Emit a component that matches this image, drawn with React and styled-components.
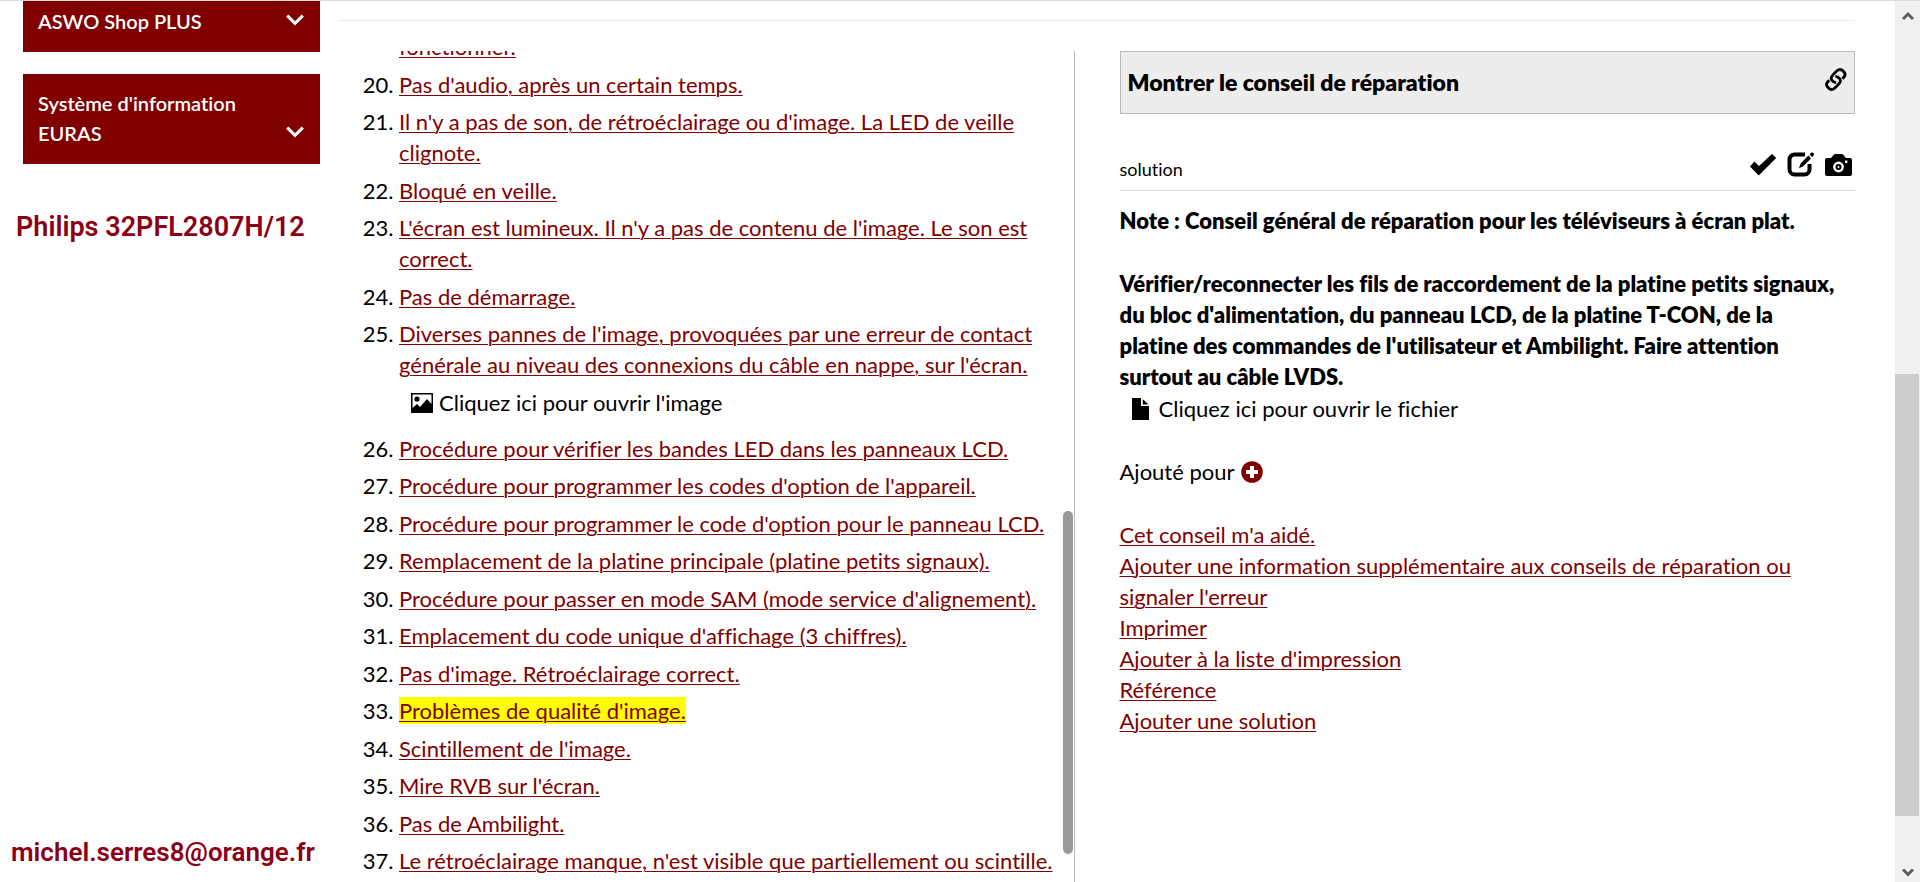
import React from 'react';
import styled, { createGlobalStyle, css } from 'styled-components';

const GlobalStyle = createGlobalStyle`
  *, *::before, *::after { box-sizing: border-box; }
  body {
    margin: 0;
    background: #fff;
    color: #000;
    font-family: Lato, "Liberation Sans", sans-serif;
    font-size: 22px;
    line-height: 31px;
    font-variant-ligatures: none;
  }
  button { font: inherit; color: inherit; cursor: pointer; }
`;

const Page = styled.div`
  display: flex;
  height: 100vh;
  overflow: hidden;
  border-top: 1px solid #dcdcdc;
`;

const Sidebar = styled.aside`
  display: flex;
  flex-direction: column;
  flex: none;
  width: 339px;
  padding-bottom: 14px;
`;

const MenuButton = styled.button`
  display: flex;
  align-items: flex-end;
  justify-content: space-between;
  flex: none;
  margin: 0 19px 22px 23px;
  padding: ${(p) => (p.$cut ? '5px' : '14px')} 16px 16px 15px;
  border: 0;
  background: #800000;
  color: #fff;
  font-size: 20px;
  font-weight: 600;
  line-height: 30px;
  text-align: left;

  svg { flex: none; margin-bottom: 10px; }
`;

const accountText = css`
  margin: 0;
  color: #8b0016;
  font-family: Roboto, "Liberation Sans", sans-serif;
  font-weight: 600;
  line-height: 32px;
  white-space: nowrap;
`;

const DeviceName = styled.h1`
  ${accountText}
  padding: 25px 0 0 16px;
  font-size: 27px;
`;

const Account = styled.p`
  ${accountText}
  margin-top: auto;
  padding-left: 11px;
  font-size: 26px;
`;

const Main = styled.main`
  display: flex;
  flex-direction: column;
  flex: 1;
  min-width: 0;
  padding: 19px 40px 0 0;
`;

const Columns = styled.div`
  display: grid;
  grid-template-columns: 1fr 1fr;
  grid-template-rows: minmax(0, 1fr);
  gap: 45px;
  flex: 1;
  min-height: 0;
  padding-top: 30px;
  border-top: 1px solid #ececec;
`;

const ListPane = styled.section`
  position: relative;
  overflow: hidden;
  border-right: 1px solid #bbb;
`;

const Tips = styled.ol`
  margin: -20px 0 0;
  padding-left: 60px;
`;

const Tip = styled.li`
  padding-bottom: 6px;
  &:nth-child(odd) { padding-bottom: 7px; }
  ${(p) => p.$continued && 'list-style: none;'}
`;

const Link = styled.a`
  color: #800000;
  text-decoration: underline 1px;
  text-underline-offset: 2px;
  ${(p) => p.$active && 'background: #ff0;'}
`;

const Attachment = styled.button`
  display: flex;
  align-items: center;
  gap: ${(p) => p.$gap};
  margin: 1px 0 0;
  padding: 0 0 0 12px;
  border: 0;
  background: none;
  line-height: 31px;
`;

const TipAttachment = styled(Attachment)`
  margin: 7px 0 8px;
`;

const Thumb = styled.div`
  position: absolute;
  top: 460px;
  right: 1px;
  width: 10px;
  height: 343px;
  border-radius: 5px;
  background: #999;
`;

const Detail = styled.section`
  min-width: 0;
`;

const TipHeader = styled.header`
  display: flex;
  align-items: flex-start;
  justify-content: space-between;
  height: 63px;
  padding: 15px 7px 0 7px;
  border: 1px solid #bbb;
  background: #ededed;
`;

const TipTitle = styled.h2`
  margin: 0;
  font-size: 23px;
  font-weight: 800;
  line-height: 31px;
`;

const IconButton = styled.button`
  display: flex;
  padding: 1px 0;
  border: 0;
  background: none;
  color: ${(p) => p.$color || '#000'};
`;

const SolutionBar = styled.div`
  display: flex;
  align-items: flex-end;
  justify-content: space-between;
  margin-top: 37px;
  padding-bottom: 8px;
  border-bottom: 1px solid #ddd;
`;

const SolutionLabel = styled.h3`
  margin: 0;
  font-size: 18px;
  font-weight: 400;
  line-height: 26px;
`;

const Actions = styled.div`
  display: flex;
  align-items: center;
  gap: 10px;
  padding: 0 3px 4px 0;
`;

const Advice = styled.p`
  margin: ${(p) => p.$top} 0 0;
  padding-right: 15px;
  font-weight: 800;
`;

const AddedFor = styled.div`
  display: flex;
  align-items: center;
  gap: 6px;
  margin: 32px 0;
`;

const Links = styled.ul`
  margin: 0;
  padding: 0;
  list-style: none;
`;

const Scrollbar = styled.div`
  display: flex;
  flex-direction: column;
  align-items: center;
  flex: none;
  width: 25px;
  padding: 10px 0 4px;
  background: #f0f0f0;
`;

const ScrollTrack = styled.div`
  display: grid;
  grid-template-rows: 353fr 442fr 52fr;
  align-self: stretch;
  flex: 1;
  padding-right: 1px;

  &::after {
    content: '';
    grid-row: 2;
    background: #cdcdcd;
  }
`;

const ChevronIcon = () => (
  <svg width="18" height="12" viewBox="0 0 18 12" aria-hidden="true">
    <path d="M1.2 1.6 L9 9.4 L16.8 1.6" fill="none" stroke="#fff" strokeWidth="3" />
  </svg>
);

const ArrowIcon = ({ down }) => (
  <svg width="12" height="10" viewBox="0 0 12 10" aria-hidden="true">
    <path d={down ? 'M1 1.5 L6 6.5 L11 1.5' : 'M1 8 L6 3 L11 8'} fill="none" stroke="#5c5c5c" strokeWidth="3" />
  </svg>
);

const PictureIcon = () => (
  <svg width="22" height="20" viewBox="0 0 22 20" aria-hidden="true">
    <path fillRule="evenodd" d="M0 0H22V20H0Z M1.5 1.5V15L6 11L9 14L16 6L20.5 11V1.5Z" />
    <circle cx="6" cy="6" r="2.6" />
  </svg>
);

const FileIcon = () => (
  <svg width="17" height="22" viewBox="0 0 17 22" aria-hidden="true">
    <path d="M0 0H9V8H17V22H0Z M10.8 1.2L16.4 6.6H10.8Z" />
  </svg>
);

const LinkIcon = () => (
  <svg width="22" height="23" viewBox="0 0 22 23" fill="none" stroke="currentColor" strokeWidth="2.8" aria-hidden="true">
    <path d="M11.2 14.6 C8 14.4 5.2 11.6 6.6 8.8 C7.4 7.4 10 4.6 12 2.8 C13.8 1.2 15.8 1.2 17.4 2.4 L19 4 C20.4 5.6 20.4 7.2 19.2 8.8 L17.4 10.8" />
    <path d="M10.4 8.4 C13.6 8.6 16.4 11.4 15 14.2 C14.2 15.6 11.6 18.4 9.6 20.2 C7.8 21.8 5.8 21.8 4.2 20.6 L2.6 19 C1.2 17.4 1.2 15.8 2.4 14.2 L4.2 12.2" />
  </svg>
);

const CheckIcon = () => (
  <svg width="27" height="24" viewBox="0 0 27 24" aria-hidden="true">
    <path d="M0 13.6 L4.4 8.6 L9 13 L22 1 L26.2 5 L8.7 22.6Z" />
  </svg>
);

const EditIcon = () => (
  <svg width="28" height="25" viewBox="0 0 28 25" aria-hidden="true">
    <path d="M18 2.5H7.5A5 5 0 0 0 2.5 7.5V17.5A5 5 0 0 0 7.5 22.5H17.5A5 5 0 0 0 22.5 17.5V12" fill="none" stroke="#000" strokeWidth="4" />
    <path d="M12 16.2 L13.6 11.6 L21.4 3.6 L24 6.4 L16.2 14.2Z M22.6 2.4 L24.4 .6 Q25.4 0 26.4 1 Q27.6 2.2 26.8 3.2 L25.2 5Z" />
  </svg>
);

const CameraIcon = () => (
  <svg width="27" height="22" viewBox="0 0 27 22" aria-hidden="true">
    <path fillRule="evenodd" d="M2 4H6L8.5 1Q9.3 0 10.5 0H16.5Q17.7 0 18.5 1L21 4H25Q27 4 27 6V20Q27 22 25 22H2Q0 22 0 20V6Q0 4 2 4Z M13.5 7.6A5.4 5.4 0 1 0 13.5 18.4A5.4 5.4 0 1 0 13.5 7.6Z M20 6.6H22.4V9H20Z" />
    <path fillRule="evenodd" d="M13.5 10A3 3 0 1 0 13.5 16A3 3 0 1 0 13.5 10Z M13.5 12A1 1 0 1 1 13.5 14A1 1 0 1 1 13.5 12Z" />
  </svg>
);

const PlusIcon = () => (
  <svg width="22" height="22" viewBox="0 0 22 22" aria-hidden="true">
    <circle cx="11" cy="11" r="10.8" fill="currentColor" />
    <path d="M11 5V17M5 11H17" stroke="#fff" strokeWidth="4" />
  </svg>
);

const tips = [
  { text: 'fonctionner.', continued: true },
  { text: "Pas d'audio, après un certain temps." },
  { text: "Il n'y a pas de son, de rétroéclairage ou d'image. La LED de veille clignote." },
  { text: 'Bloqué en veille.' },
  { text: "L'écran est lumineux. Il n'y a pas de contenu de l'image. Le son est correct." },
  { text: 'Pas de démarrage.' },
  {
    text: "Diverses pannes de l'image, provoquées par une erreur de contact générale au niveau des connexions du câble en nappe, sur l'écran.",
    image: "Cliquez ici pour ouvrir l'image",
  },
  { text: 'Procédure pour vérifier les bandes LED dans les panneaux LCD.' },
  { text: "Procédure pour programmer les codes d'option de l'appareil." },
  { text: "Procédure pour programmer le code d'option pour le panneau LCD." },
  { text: 'Remplacement de la platine principale (platine petits signaux).' },
  { text: "Procédure pour passer en mode SAM (mode service d'alignement)." },
  { text: "Emplacement du code unique d'affichage (3 chiffres)." },
  { text: "Pas d'image. Rétroéclairage correct." },
  { text: "Problèmes de qualité d'image.", active: true },
  { text: "Scintillement de l'image." },
  { text: "Mire RVB sur l'écran." },
  { text: 'Pas de Ambilight.' },
  { text: "Le rétroéclairage manque, n'est visible que partiellement ou scintille." },
];

const links = [
  "Cet conseil m'a aidé.",
  "Ajouter une information supplémentaire aux conseils de réparation ou signaler l'erreur",
  'Imprimer',
  "Ajouter à la liste d'impression",
  'Référence',
  'Ajouter une solution',
];

export default function App() {
  return (
    <>
      <GlobalStyle />
      <Page>
        <Sidebar>
          <MenuButton $cut>
            ASWO Shop PLUS
            <ChevronIcon />
          </MenuButton>
          <MenuButton>
            Système d'information EURAS
            <ChevronIcon />
          </MenuButton>
          <DeviceName>Philips 32PFL2807H/12</DeviceName>
          <Account>michel.serres8@orange.fr</Account>
        </Sidebar>
        <Main>
          <Columns>
            <ListPane>
              <Tips start={19}>
                {tips.map((tip) => (
                  <Tip key={tip.text} $continued={tip.continued}>
                    <Link href="#" $active={tip.active}>{tip.text}</Link>
                    {tip.image && (
                      <TipAttachment $gap="6px">
                        <PictureIcon />
                        {tip.image}
                      </TipAttachment>
                    )}
                  </Tip>
                ))}
              </Tips>
              <Thumb />
            </ListPane>
            <Detail>
              <TipHeader>
                <TipTitle>Montrer le conseil de réparation</TipTitle>
                <IconButton aria-label="Lien">
                  <LinkIcon />
                </IconButton>
              </TipHeader>
              <SolutionBar>
                <SolutionLabel>solution</SolutionLabel>
                <Actions>
                  <IconButton aria-label="Valider"><CheckIcon /></IconButton>
                  <IconButton aria-label="Modifier"><EditIcon /></IconButton>
                  <IconButton aria-label="Photo"><CameraIcon /></IconButton>
                </Actions>
              </SolutionBar>
              <Advice $top="14px">Note : Conseil général de réparation pour les téléviseurs à écran plat.</Advice>
              <Advice $top="32px">
                Vérifier/reconnecter les fils de raccordement de la platine petits signaux, du bloc
                d'alimentation, du panneau LCD, de la platine T-CON, de la platine des commandes de
                l'utilisateur et Ambilight. Faire attention surtout au câble LVDS.
              </Advice>
              <Attachment $gap="10px">
                <FileIcon />
                Cliquez ici pour ouvrir le fichier
              </Attachment>
              <AddedFor>
                Ajouté pour
                <IconButton $color="#800000" aria-label="Ajouter un appareil">
                  <PlusIcon />
                </IconButton>
              </AddedFor>
              <Links>
                {links.map((text) => (
                  <li key={text}>
                    <Link href="#">{text}</Link>
                  </li>
                ))}
              </Links>
            </Detail>
          </Columns>
        </Main>
        <Scrollbar aria-hidden="true">
          <ArrowIcon />
          <ScrollTrack />
          <ArrowIcon down />
        </Scrollbar>
      </Page>
    </>
  );
}
